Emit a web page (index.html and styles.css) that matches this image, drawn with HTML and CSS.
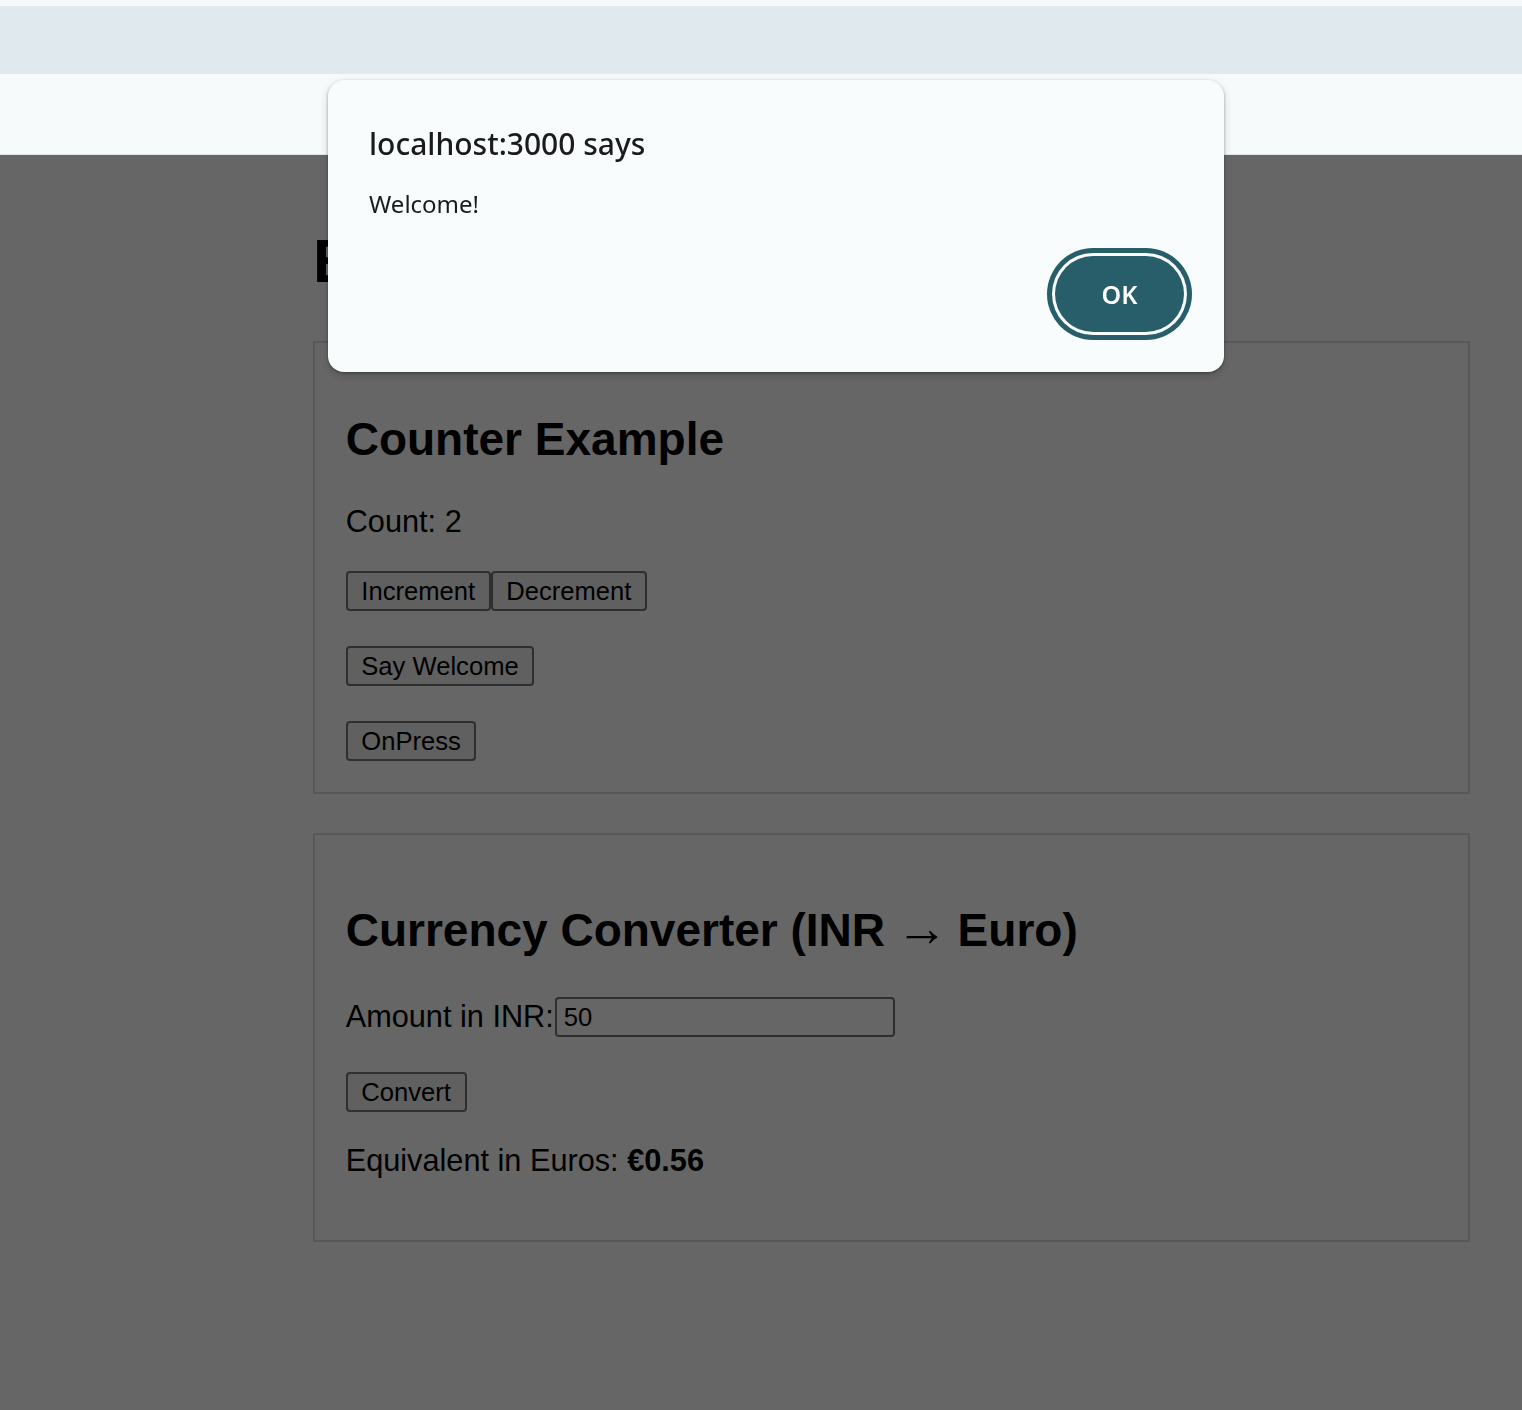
FILE: index.html
```html
<!DOCTYPE html>
<html lang="en">
<head>
<meta charset="utf-8">
<title>Event Handling</title>
<link rel="stylesheet" href="styles.css">
</head>
<body>
<div class="chrome">
  <div class="chrome-strip"></div>
  <div class="chrome-tabs"></div>
  <div class="chrome-toolbar"></div>
</div>
<main class="page">
  <div class="container">
    <h1 class="title">Event Handling</h1>
    <section class="card">
      <h2 class="card-title">Counter Example</h2>
      <p class="text">Count: 2</p>
      <div class="row"><button class="btn">Increment</button><button class="btn">Decrement</button></div>
      <div class="row"><button class="btn">Say Welcome</button></div>
      <div class="row"><button class="btn">OnPress</button></div>
    </section>
    <section class="card">
      <h2 class="card-title">Currency Converter (INR <span class="arrow">→</span> Euro)</h2>
      <div class="row row-first-field"><label class="label" for="amt">Amount in INR:</label><input id="amt" class="field" type="text" value="50"></div>
      <div class="row"><button class="btn">Convert</button></div>
      <p class="text">Equivalent in Euros: <strong>€0.56</strong></p>
    </section>
  </div>
</main>
<div class="overlay"></div>
<div class="dialog" role="alertdialog">
  <div class="dialog-title">localhost:3000 says</div>
  <div class="dialog-msg">Welcome!</div>
  <div class="dialog-actions"><button class="ok">OK</button></div>
</div>
</body>
</html>
```
FILE: styles.css
```css
html, body {
  margin: 0;
  padding: 0;
  background: #ffffff;
}
body {
  font-family: "Liberation Sans", Arial, sans-serif;
  color: #000;
  min-height: 1410px;
  overflow: hidden;
}
.chrome-strip {
  height: 6px;
  background: #f5f9fa;
}
.chrome-tabs {
  height: 68px;
  background: #dfe9ee;
}
.chrome-toolbar {
  height: 80px;
  background: #f6fafb;
  border-bottom: 1px solid #e2e6e8;
}
.page {
  padding-top: 29px;
}
.container {
  margin-left: 313px;
  width: 1157px;
}
.title {
  font-size: 61.4px;
  font-weight: bold;
  margin: 41px 0 45px;
}
.card {
  border: 2px solid #dddddd;
  padding: 0 30.7px 30.7px;
  margin-bottom: 39px;
  overflow: hidden;
}
.card-title {
  font-size: 46px;
  font-weight: bold;
  margin: 68.5px 0 38.2px;
}
.arrow {
  font-weight: normal;
  font-size: 52px;
  line-height: 0;
  margin: 0 -3px 0 -2px;
}
.text {
  font-size: 30.7px;
  margin: 30.7px 0;
}
.row {
  display: flex;
  align-items: center;
  gap: 0;
  margin-top: 31.5px;
}
.row + .row {
  margin-top: 35px;
}
.row-first-field {
  margin-top: 40px;
}
.btn {
  height: 40px;
  padding: 0 13.6px;
  font-family: "Liberation Sans", Arial, sans-serif;
  font-size: 25.6px;
  color: #000;
  background: #efefef;
  border: 2px solid #767676;
  border-radius: 4px;
}
.label {
  font-size: 30.7px;
}
.field {
  box-sizing: border-box;
  width: 340px;
  height: 40px;
  padding: 0 7px;
  margin-left: 1px;
  font-family: "Liberation Sans", Arial, sans-serif;
  font-size: 25.6px;
  color: #000;
  background: #fff;
  border: 2px solid #767676;
  border-radius: 4px;
}
.overlay {
  position: fixed;
  top: 155px;
  left: 0;
  right: 0;
  bottom: 0;
  background: rgba(0, 0, 0, 0.6);
}
.dialog {
  position: fixed;
  left: 328px;
  top: 80px;
  width: 896px;
  height: 292px;
  box-sizing: border-box;
  padding: 44px 40px 32px 41px;
  background: #f8fcfd;
  border-radius: 16px;
  box-shadow: 0 1px 3px rgba(0, 0, 0, 0.35), 0 4px 10px rgba(0, 0, 0, 0.15);
  font-family: "Noto Sans", "Open Sans", sans-serif;
  color: #1b1b1b;
  display: flex;
  flex-direction: column;
}
.dialog-title {
  font-size: 30px;
  font-weight: 500;
  line-height: 40px;
}
.dialog-msg {
  font-size: 24px;
  line-height: 30px;
  margin-top: 24.7px;
}
.dialog-actions {
  display: flex;
  justify-content: flex-end;
  margin-top: 37.3px;
}
.ok {
  width: 129px;
  height: 76px;
  border: none;
  border-radius: 38px;
  background: #275e69;
  color: #ffffff;
  font-family: "Noto Sans", "Open Sans", sans-serif;
  font-size: 25px;
  font-weight: 600;
  box-shadow: 0 0 0 3px #f8fcfd, 0 0 0 8px #275e69;
}
```
